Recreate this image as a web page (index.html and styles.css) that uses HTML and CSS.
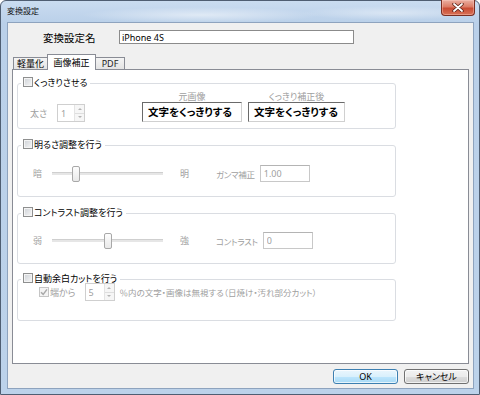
FILE: index.html
```html
<!DOCTYPE html>
<html lang="ja">
<head>
  <meta charset="UTF-8">
  <title>変換設定</title>
  <link rel="stylesheet" href="styles.css">
</head>
<body>

<div class="window">
  <div class="titlebar">
    <span class="title">変換設定</span>
    <span class="close">
      <svg width="12" height="9" viewBox="0 0 12 9">
        <path d="M2 1 L10 8 M10 1 L2 8" stroke="#5b2117" stroke-width="3.4" stroke-linecap="round"/>
        <path d="M2 1 L10 8 M10 1 L2 8" stroke="#fff" stroke-width="1.8" stroke-linecap="round"/>
      </svg>
    </span>
  </div>

  <div class="client">
    <div class="name-row">
      <label for="presetName">変換設定名</label>
      <input type="text" id="presetName" value="iPhone 4S">
    </div>

    <div class="tabs">
      <span class="tab">軽量化</span>
      <span class="tab active">画像補正</span>
      <span class="tab">PDF</span>
    </div>

    <div class="panel">
      <fieldset class="group">
        <legend><span class="check"></span>くっきりさせる</legend>
        <div class="sharp-row">
          <div class="thick">
            <span class="dim thick-label">太さ</span>
            <div class="spin">
              <input type="text" value="1" disabled>
              <span class="spin-btns"><span class="up"></span><span class="down"></span></span>
            </div>
          </div>
          <div class="sample">
            <div class="sample-label">元画像</div>
            <div class="sample-box">文字をくっきりする</div>
          </div>
          <div class="sample sample-after">
            <div class="sample-label">くっきり補正後</div>
            <div class="sample-box">文字をくっきりする</div>
          </div>
        </div>
      </fieldset>

      <fieldset class="group group-gap">
        <legend><span class="check"></span>明るさ調整を行う</legend>
        <div class="slider-row">
          <span class="dim end-label">暗</span>
          <input type="range" class="slider" min="0" max="100" value="19" disabled>
          <span class="dim max-label">明</span>
          <label class="dim value-label" for="gamma">ガンマ補正</label>
          <input type="text" id="gamma" class="value-input" value="1.00" disabled>
        </div>
      </fieldset>

      <fieldset class="group group-gap">
        <legend><span class="check"></span>コントラスト調整を行う</legend>
        <div class="slider-row contrast">
          <span class="dim end-label">弱</span>
          <input type="range" class="slider" min="0" max="100" value="50" disabled>
          <span class="dim max-label">強</span>
          <label class="dim value-label" for="contrast">コントラスト</label>
          <input type="text" id="contrast" class="value-input" value="0" disabled>
        </div>
      </fieldset>

      <fieldset class="group group-last">
        <legend><span class="check"></span>自動余白カットを行う</legend>
        <div class="cut-row">
          <span class="check checked">
            <svg width="8" height="8" viewBox="0 0 8 8"><path d="M1 4.2 L3.2 6.4 L7 1.4" fill="none" stroke="#a9a9a9" stroke-width="1.5"/></svg>
          </span>
          <span class="dim">端から</span>
          <div class="spin spin-wide">
            <input type="text" value="5" disabled>
            <span class="spin-btns"><span class="up"></span><span class="down"></span></span>
          </div>
          <span class="dim cut-note">％内の文字・画像は無視する（日焼け・汚れ部分カット）</span>
        </div>
      </fieldset>
    </div>

    <div class="buttons">
      <button class="btn default">OK</button>
      <button class="btn">キャンセル</button>
    </div>
  </div>
</div>

</body>
</html>
```

FILE: styles.css
```css
body {
  margin: 0;
  font-family: "Noto Sans", "Noto Sans CJK JP", sans-serif;
  font-size: 9px;
  font-feature-settings: "palt";
  color: #000;
  background: #fff;
}
.window {
  width: 480px;
  height: 395px;
  box-sizing: border-box;
  border: 1px solid #4f5e72;
  border-radius: 6px 6px 0 0;
  background: linear-gradient(180deg, #cadcf0 0, #bad0e9 22px, #bcd2ea 100%);
  padding: 0 5px 5px 6px;
  display: flex;
  flex-direction: column;
}
.titlebar {
  height: 21px;
  display: flex;
  align-items: flex-start;
  background: radial-gradient(ellipse 120px 8px at 200px 14px, rgba(255, 255, 255, 0.5), transparent),
              radial-gradient(ellipse 90px 7px at 390px 12px, rgba(255, 255, 255, 0.4), transparent);
  margin: 0 -5px 0 -6px;
  padding: 0 5px 0 6px;
}
.title {
  font-size: 8px;
  line-height: 10px;
  margin-top: 5px;
  color: #111;
}
.close {
  margin-left: auto;
  margin-right: -1px;
  margin-top: -1px;
  width: 34px;
  height: 16px;
  box-sizing: border-box;
  border: 1px solid #7a2e22;
  border-top: none;
  border-radius: 0 0 4px 4px;
  background: linear-gradient(180deg, #eab0a2 0, #dc7c66 45%, #c94c34 55%, #d87257 100%);
  box-shadow: inset 0 0 0 1px rgba(255, 210, 200, 0.4);
  display: flex;
  align-items: center;
  justify-content: center;
}
.client {
  flex: 1;
  border: 1px solid #8ea3be;
  background: #f0f0f0;
  display: flex;
  flex-direction: column;
}
.name-row {
  display: flex;
  align-items: center;
  margin-top: 7px;
  padding-left: 35px;
  height: 14px;
}
.name-row label {
  font-size: 10.5px;
  width: 76px;
}
.name-row input {
  width: 235px;
  height: 14px;
  box-sizing: border-box;
  border: 1px solid #8b8b8b;
  padding: 0 2px;
  font: inherit;
  font-size: 9px;
  background: #fff;
  outline: none;
}
.tabs {
  display: flex;
  align-items: flex-end;
  height: 15px;
  margin-top: 10px;
  padding-left: 5px;
}
.tab {
  height: 12px;
  box-sizing: border-box;
  border: 1px solid #898c95;
  border-bottom: none;
  background: linear-gradient(180deg, #f4f4f4, #e4e4e4);
  display: flex;
  align-items: center;
  justify-content: center;
  line-height: 1;
  width: 35px;
}
.tab + .tab {
  margin-left: -1px;
}
.tab:last-child {
  width: 30px;
  color: #222;
}
.tab.active {
  width: 49px;
  height: 16px;
  margin-bottom: -1px;
  background: #fff;
  position: relative;
  z-index: 1;
  padding-bottom: 1px;
}
.panel {
  margin-left: 4px;
  width: 457px;
  height: 295px;
  box-sizing: border-box;
  border: 1px solid #898c95;
  background: #fff;
}
.group {
  margin: 7px 0 0 4px;
  width: 379px;
  box-sizing: border-box;
  border: 1px solid #dadde2;
  border-radius: 3px;
  padding: 0;
  min-width: 0;
}
.group-gap {
  margin-top: 10px;
}
.group-last {
  margin-top: 9px;
}
legend {
  margin-left: 3px;
  padding: 0 3px 0 2px;
  line-height: 12px;
  height: 12px;
}
.check {
  display: inline-block;
  width: 10px;
  height: 10px;
  box-sizing: border-box;
  border: 1px solid #8e8f8f;
  background: linear-gradient(135deg, #cdd1d6, #f7f7f7);
  box-shadow: inset 0 0 0 1px #f4f4f4;
  vertical-align: -1px;
  margin-right: 1px;
}
.check.checked {
  border-color: #c5c5c5;
  background: #f4f4f4;
  box-shadow: none;
  display: flex;
  align-items: center;
  justify-content: center;
}
.dim {
  color: #a0a0a0;
}
.sharp-row {
  display: flex;
  align-items: flex-end;
  padding: 3px 0 6px 12px;
}
.thick {
  display: flex;
  align-items: center;
}
.thick-label {
  width: 27px;
}
.spin {
  display: flex;
  width: 28px;
  height: 18px;
  box-sizing: border-box;
  border: 1px solid #cfcfcf;
  background: #fff;
}
.spin-wide {
  width: 30px;
  margin-left: 9px;
}
.spin input {
  flex: 1;
  width: 0;
  border: 0;
  padding: 0 0 0 3px;
  font: inherit;
  color: #a0a0a0;
  background: transparent;
}
.spin-btns {
  width: 9px;
  display: flex;
  flex-direction: column;
  border-left: 1px solid #e4e4e4;
}
.spin-btns span {
  flex: 1;
  display: flex;
  align-items: center;
  justify-content: center;
  background: #f6f6f6;
}
.spin-btns .up {
  border-bottom: 1px solid #dedede;
}
.spin-btns .up::before {
  content: "";
  border: 2px solid transparent;
  border-bottom: 2px solid #b4b4b4;
  border-top: none;
}
.spin-btns .down::before {
  content: "";
  border: 2px solid transparent;
  border-top: 2px solid #b4b4b4;
  border-bottom: none;
}
.sample {
  width: 100px;
  margin-left: 57px;
}
.sample-after {
  width: 97px;
  margin-left: 6px;
}
.sample-label {
  color: #a0a0a0;
  text-align: center;
  line-height: 10px;
  height: 10px;
}
.sample-box {
  height: 20px;
  box-sizing: border-box;
  border: 1px solid;
  border-color: #6a6a6a #d0d0d0 #d0d0d0 #6a6a6a;
  background: #fff;
  font-size: 10.5px;
  font-weight: bold;
  line-height: 18px;
  padding-left: 5px;
  white-space: nowrap;
}
.slider-row {
  display: flex;
  align-items: center;
  height: 17px;
  padding: 14px 0 14px 15px;
}
.slider-row.contrast {
  padding-top: 13px;
}
.end-label {
  width: 19px;
}
.slider {
  -webkit-appearance: none;
  appearance: none;
  width: 111px;
  height: 16px;
  margin: 0;
  background: transparent;
}
.slider::-webkit-slider-runnable-track {
  height: 3px;
  background: #e6e6e6;
  border-top: 1px solid #cfcfcf;
  box-sizing: border-box;
}
.slider::-webkit-slider-thumb {
  -webkit-appearance: none;
  width: 8px;
  height: 16px;
  box-sizing: border-box;
  margin-top: -7px;
  border: 1px solid #a8a8a8;
  border-radius: 2px;
  background: linear-gradient(180deg, #fdfdfd, #e9e9e9);
}
.max-label {
  margin-left: 17px;
  width: 36px;
}
.value-label {
  margin-right: 5px;
  white-space: nowrap;
  font-size: 8.5px;
  letter-spacing: -0.3px;
}
.value-input {
  width: 50px;
  height: 17px;
  box-sizing: border-box;
  border: 1px solid #c8c8c8;
  border-top-color: #b4b4b4;
  padding: 0 0 0 3px;
  font: inherit;
  color: #a0a0a0;
  background: #fff;
}
.cut-row {
  display: flex;
  align-items: center;
  height: 18px;
  margin-top: -2px;
  padding: 0 0 19px 21px;
}
.cut-note {
  margin-left: 5px;
  white-space: nowrap;
  font-size: 8.5px;
}
.buttons {
  display: flex;
  justify-content: flex-end;
  gap: 6px;
  margin-top: 5px;
  padding-right: 4px;
}
.btn {
  width: 65px;
  height: 15px;
  box-sizing: border-box;
  border: 1px solid #707070;
  border-radius: 3px;
  padding: 0;
  font: inherit;
  color: #000;
  background: linear-gradient(180deg, #f2f2f2 0, #ebebeb 50%, #dddddd 50%, #cfcfcf 100%);
  box-shadow: inset 0 0 0 1px rgba(255, 255, 255, 0.7);
}
.btn.default {
  border-color: #3c7fb1;
  background: linear-gradient(180deg, #eaf6fd 0, #d9f0fc 50%, #bee6fd 50%, #a7d9f5 100%);
}
```
